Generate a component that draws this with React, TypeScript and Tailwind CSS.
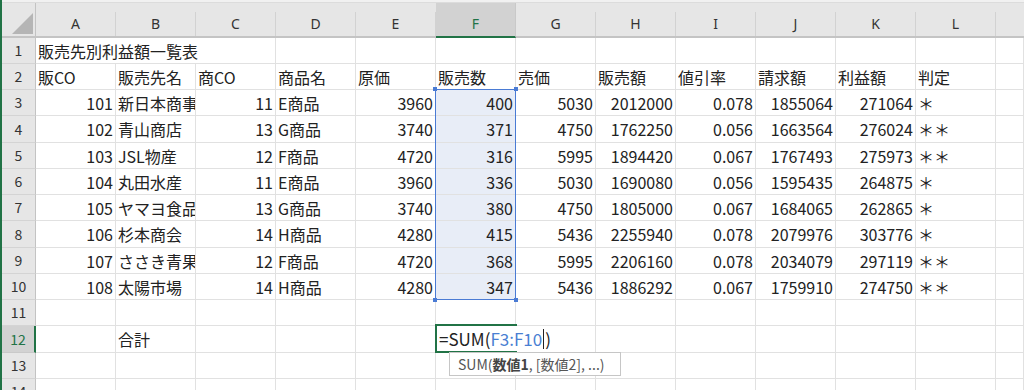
import React from 'react';

const COLS = ['A', 'B', 'C', 'D', 'E', 'F', 'G', 'H', 'I', 'J', 'K', 'L'];
const ROW_H = [
  'h-[26px]', 'h-[26px]', 'h-[26px]', 'h-[27px]', 'h-[26px]', 'h-[26px]', 'h-[26px]',
  'h-[27px]', 'h-[26px]', 'h-[26px]', 'h-[26px]', 'h-[27px]', 'h-[26px]', 'h-[26px]',
];

type Cell = string;
const HEAD: Cell[] = ['販CO', '販売先名', '商CO', '商品名', '原価', '販売数', '売価', '販売額', '値引率', '請求額', '利益額', '判定'];
const DATA: Cell[][] = [
  ['101', '新日本商事', '11', 'E商品', '3960', '400', '5030', '2012000', '0.078', '1855064', '271064', '＊'],
  ['102', '青山商店', '13', 'G商品', '3740', '371', '4750', '1762250', '0.056', '1663564', '276024', '＊＊'],
  ['103', 'JSL物産', '12', 'F商品', '4720', '316', '5995', '1894420', '0.067', '1767493', '275973', '＊＊'],
  ['104', '丸田水産', '11', 'E商品', '3960', '336', '5030', '1690080', '0.056', '1595435', '264875', '＊'],
  ['105', 'ヤマヨ食品', '13', 'G商品', '3740', '380', '4750', '1805000', '0.067', '1684065', '262865', '＊'],
  ['106', '杉本商会', '14', 'H商品', '4280', '415', '5436', '2255940', '0.078', '2079976', '303776', '＊'],
  ['107', 'ささき青果', '12', 'F商品', '4720', '368', '5995', '2206160', '0.078', '2034079', '297119', '＊＊'],
  ['108', '太陽市場', '14', 'H商品', '4280', '347', '5436', '1886292', '0.067', '1759910', '274750', '＊＊'],
];
const NUMERIC = [true, false, true, false, true, true, true, true, true, true, true, false];

const GRID = 'border-r border-b border-[#e1e1e1]';

function RowHeader({ n, selected }: { n: number; selected?: boolean }) {
  return (
    <div
      className={
        selected
          ? 'w-[34px] shrink-0 flex items-center justify-center bg-[#d2d2d2] text-[#217346] border-b border-[#c9c9c9] border-r-2 border-r-[#217346] text-[14px]'
          : 'w-[34px] shrink-0 flex items-center justify-center bg-[#e6e6e6] text-[#333] border-b border-r border-b-[#d4d4d4] border-r-[#c3c3c3] text-[14px]'
      }
    >
      {n}
    </div>
  );
}

function DataCell({ text, right, sel }: { text?: string; right?: boolean; sel?: boolean }) {
  return (
    <div
      className={`w-[80px] shrink-0 ${GRID} flex items-center overflow-hidden whitespace-nowrap ${
        right ? 'justify-end pr-[2px]' : 'justify-start pl-[2px]'
      } ${sel ? 'bg-[#e8edf7]' : 'bg-white'}`}
    >
      {text}
    </div>
  );
}

function Tail() {
  return <div className={`flex-1 ${GRID} bg-white`} />;
}

export default function App() {
  return (
    <div className="relative w-[1024px] h-[390px] overflow-hidden bg-white flex [font-family:'Noto_Sans_CJK_JP',sans-serif] text-[16px] text-[#222]">
      <div className="w-[2px] shrink-0 bg-[#217346]" />
      <div className="flex-1 flex flex-col">
        {/* column header */}
        <div className="h-[38px] shrink-0 flex flex-col bg-[#e6e6e6] border-b-2 border-[#c4c4c4] [font-family:'Noto_Sans',sans-serif] text-[14px] text-[#333]">
          <div className="h-[3px] bg-[#f1f1f1] border-b border-[#dcdcdc]" />
          <div className="h-[9px]" />
          <div className="flex-1 flex">
            <div className="w-[34px] shrink-0 relative border-r border-[#c3c3c3] -mt-[9px]">
              <svg className="absolute right-[2px] bottom-[2px]" width="21" height="21" viewBox="0 0 21 21">
                <polygon points="21,0 21,21 0,21" fill="#b5b5b5" />
              </svg>
            </div>
            {COLS.map((c) =>
              c === 'F' ? (
                <div
                  key={c}
                  className="w-[80px] shrink-0 flex items-center justify-center bg-[#d2d2d2] text-[#217346] border-r border-[#c9c9c9] border-b-2 border-b-[#217346] -mt-[9px] pt-[7px] -mb-[2px]"
                >
                  {c}
                </div>
              ) : (
                <div key={c} className="w-[80px] shrink-0 flex items-center justify-center border-r border-[#d2d2d2] pb-[2px]">
                  {c}
                </div>
              )
            )}
            <div className="flex-1" />
          </div>
        </div>

        {/* row 1 */}
        <div className={`${ROW_H[0]} shrink-0 flex`}>
          <RowHeader n={1} />
          <div className={`w-[240px] shrink-0 ${GRID} flex items-center pl-[2px] whitespace-nowrap overflow-hidden`}>
            販売先別利益額一覧表
          </div>
          {COLS.slice(3).map((c) => (
            <DataCell key={c} />
          ))}
          <Tail />
        </div>

        {/* row 2 */}
        <div className={`${ROW_H[1]} shrink-0 flex`}>
          <RowHeader n={2} />
          {HEAD.map((h, i) => (
            <DataCell key={i} text={h} />
          ))}
          <Tail />
        </div>

        {DATA.map((r, ri) => (
          <div key={ri} className={`${ROW_H[ri + 2]} shrink-0 flex`}>
            <RowHeader n={ri + 3} />
            {r.map((v, ci) => (
              <DataCell key={ci} text={v} right={NUMERIC[ci]} sel={ci === 5} />
            ))}
            <Tail />
          </div>
        ))}

        {/* row 11 */}
        <div className={`${ROW_H[10]} shrink-0 flex`}>
          <RowHeader n={11} />
          {COLS.map((c) => (
            <DataCell key={c} />
          ))}
          <Tail />
        </div>

        {/* row 12 */}
        <div className={`${ROW_H[11]} shrink-0 flex`}>
          <RowHeader n={12} selected />
          <DataCell />
          <DataCell text="合計" />
          {COLS.slice(2).map((c) => (
            <DataCell key={c} />
          ))}
          <Tail />
        </div>

        {/* rows 13, 14 */}
        {[13, 14].map((n) => (
          <div key={n} className={`${ROW_H[n - 1]} shrink-0 flex`}>
            <RowHeader n={n} />
            {COLS.map((c) => (
              <DataCell key={c} />
            ))}
            <Tail />
          </div>
        ))}
      </div>

      {/* selection F3:F10 */}
      <div className="absolute left-[435px] top-[89px] w-[81px] h-[211px] border border-[#4a7bd4] pointer-events-none">
        <div className="absolute -left-[3px] -top-[3px] w-[4px] h-[4px] bg-[#4a7bd4]" />
        <div className="absolute -right-[3px] -top-[3px] w-[4px] h-[4px] bg-[#4a7bd4]" />
        <div className="absolute -left-[3px] -bottom-[3px] w-[4px] h-[4px] bg-[#4a7bd4]" />
        <div className="absolute -right-[3px] -bottom-[3px] w-[4px] h-[4px] bg-[#4a7bd4]" />
      </div>

      {/* active cell editor F12 */}
      <div className="absolute left-[435px] top-[324px] w-[82px] h-[29px] border-2 border-r-0 border-[#217346] bg-white" />
      <div className="absolute left-[437px] top-[326px] h-[25px] flex items-center bg-white pl-[2px] pr-[6px] whitespace-nowrap text-[17px] text-[#222]">
        <span>=SUM(</span>
        <span className="text-[#4a7fd3]">F3:F10</span>
        <span className="inline-block w-px h-[20px] bg-[#222] mx-[1px]" />
        <span>)</span>
      </div>

      {/* tooltip */}
      <div className="absolute left-[449px] top-[352px] w-[172px] h-[24px] pl-[8px] flex items-center bg-white border border-[#c6c6c6] text-[14px] text-[#555] whitespace-nowrap">
        SUM(<span className="font-bold text-[#444]">数値1</span>,&nbsp;[数値2],&nbsp;...)
      </div>
    </div>
  );
}
